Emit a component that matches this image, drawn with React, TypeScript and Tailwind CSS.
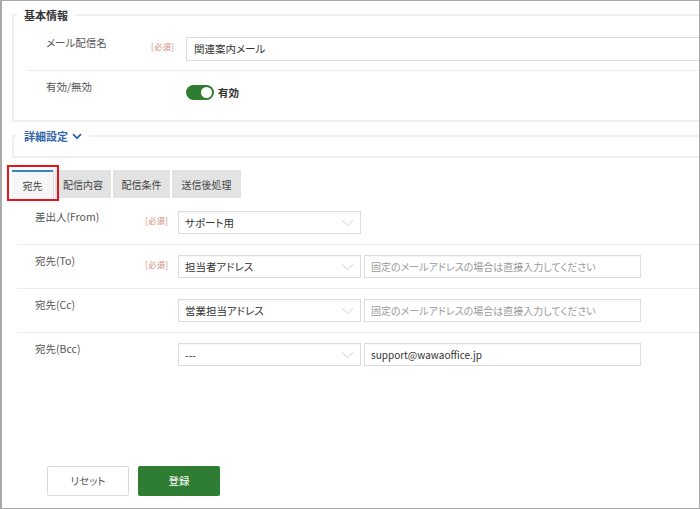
import React from "react";

const Chevron = () => (
  <svg width="13" height="8" viewBox="0 0 13 8" className="shrink-0">
    <path d="M1 1.5 L6.5 6.5 L12 1.5" fill="none" stroke="#cfcfcf" strokeWidth="1" />
  </svg>
);

const Req = () => (
  <span className="text-[8px] leading-[12px] text-[#d08a7a] tracking-[0.5px]">[必須]</span>
);

function Select({ value }: { value: string }) {
  return (
    <div className="w-[183px] h-[23px] border border-[#dcdcdc] bg-white flex items-center justify-between pl-[6px] pr-[6px] shadow-[inset_0_1px_1px_rgba(0,0,0,0.04)]">
      <span className="text-[10.5px] text-[#333]">{value}</span>
      <Chevron />
    </div>
  );
}

function TextBox({ value, placeholder }: { value?: string; placeholder?: string }) {
  return (
    <div className="w-[277px] h-[23px] border border-[#dcdcdc] bg-white flex items-center pl-[6px] shadow-[inset_0_1px_1px_rgba(0,0,0,0.04)]">
      {value ? (
        <span className="text-[10px] text-[#333]">{value}</span>
      ) : (
        <span className="text-[10px] text-[#9a9a9a]">{placeholder}</span>
      )}
    </div>
  );
}

function AddrRow({
  label,
  req,
  select,
  text,
  placeholder,
  first,
  noInput,
}: {
  label: string;
  req?: boolean;
  select: string;
  text?: string;
  placeholder?: string;
  first?: boolean;
  noInput?: boolean;
}) {
  return (
    <div
      className={
        first
          ? "flex items-start ml-[5px] pt-[13px] pb-[10px]"
          : "flex items-start ml-[5px] pt-[10px] pb-[10px] border-t border-[#ececec]"
      }
    >
      <div className="w-[128px] pl-[18px] text-[10.5px] leading-[12px] text-[#555]">{label}</div>
      <div className="w-[33px] leading-[12px]">{req ? <Req /> : null}</div>
      <div className="flex gap-[3px]">
        <Select value={select} />
        {noInput ? null : <TextBox value={text} placeholder={placeholder} />}
      </div>
    </div>
  );
}

export default function App() {
  return (
    <div className="w-[700px] h-[509px] border border-l-2 border-[#a9a9a9] bg-white overflow-hidden font-['Noto_Sans_CJK_JP','Noto_Sans',sans-serif] [font-feature-settings:'palt']">
      <div className="w-[760px] pl-[10px]">
        {/* 基本情報 */}
        <fieldset className="mt-[6px] border-2 border-[#f0f0f0] p-0">
          <legend className="ml-[3px] px-[7px] text-[11px] leading-[16px] font-bold text-[#333]">
            基本情報
          </legend>
          <div className="ml-[14px] flex items-start pt-[14px] pb-[9px] border-b border-[#ececec]">
            <div className="w-[123px] pl-[18px] text-[10.5px] leading-[12px] text-[#555]">メール配信名</div>
            <div className="w-[35px] leading-[12px]">
              <Req />
            </div>
            <div className="flex-1 h-[24px] border border-[#dcdcdc] flex items-center pl-[7px] text-[10.5px] text-[#333]">
              関連案内メール
            </div>
          </div>
          <div className="ml-[14px] flex items-start pt-[10px] pb-[20px]">
            <div className="w-[158px] pl-[18px] text-[10.5px] leading-[12px] text-[#555]">有効/無効</div>
            <div className="flex items-center gap-[4px] mt-[4px]">
              <div className="w-[28px] h-[15px] rounded-full bg-[#2e7d32] flex items-center justify-end pr-[2px]">
                <div className="w-[11px] h-[11px] rounded-full bg-white" />
              </div>
              <span className="text-[10.5px] font-bold text-[#333] leading-[12px]">有効</span>
            </div>
          </div>
        </fieldset>

        {/* 詳細設定 */}
        <fieldset className="mt-[6px] border-2 border-[#f0f0f0] p-0">
          <legend className="ml-[3px] px-[7px] text-[11px] leading-[16px] font-bold text-[#3565a8] flex items-center gap-[4px]">
            詳細設定
            <svg width="10" height="7" viewBox="0 0 10 7">
              <path d="M1 1.2 L5 5.2 L9 1.2" fill="none" stroke="#3565a8" strokeWidth="1.8" />
            </svg>
          </legend>
          <div className="h-[12px]" />
        </fieldset>

        {/* tabs */}
        <div className="relative mt-[12px] flex gap-[2px] h-[28px]">
          <div className="w-[41px] bg-[#f6f6f6] border-t-2 border-[#3a86c8] shadow-[1px_0_1px_rgba(0,0,0,0.15)] flex items-center justify-center text-[10px] text-[#444]">
            宛先
          </div>
          <div className="w-[56px] bg-[#e3e3e3] flex items-center justify-center text-[10px] text-[#444]">
            配信内容
          </div>
          <div className="w-[57px] bg-[#e3e3e3] flex items-center justify-center text-[10px] text-[#444]">
            配信条件
          </div>
          <div className="w-[69px] bg-[#e3e3e3] flex items-center justify-center text-[10px] text-[#444]">
            送信後処理
          </div>
          <div className="absolute left-[-5px] top-[-5px] w-[52px] h-[36px] border-2 border-[#e8141b]" />
        </div>

        {/* address rows */}
        <div>
          <AddrRow label="差出人(From)" req select="サポート用" first noInput />
          <AddrRow
            label="宛先(To)"
            req
            select="担当者アドレス"
            placeholder="固定のメールアドレスの場合は直接入力してください"
          />
          <AddrRow
            label="宛先(Cc)"
            select="営業担当アドレス"
            placeholder="固定のメールアドレスの場合は直接入力してください"
          />
          <AddrRow label="宛先(Bcc)" select="---" text="support@wawaoffice.jp" />
        </div>

        {/* buttons */}
        <div className="mt-[90px] ml-[35px] flex gap-[9px]">
          <button className="w-[82px] h-[30px] border border-[#d9d9d9] bg-white text-[10.5px] text-[#555] rounded-[2px]">
            リセット
          </button>
          <button className="w-[82px] h-[30px] bg-[#2e7d32] text-[10.5px] text-white rounded-[2px]">
            登録
          </button>
        </div>
      </div>
    </div>
  );
}
